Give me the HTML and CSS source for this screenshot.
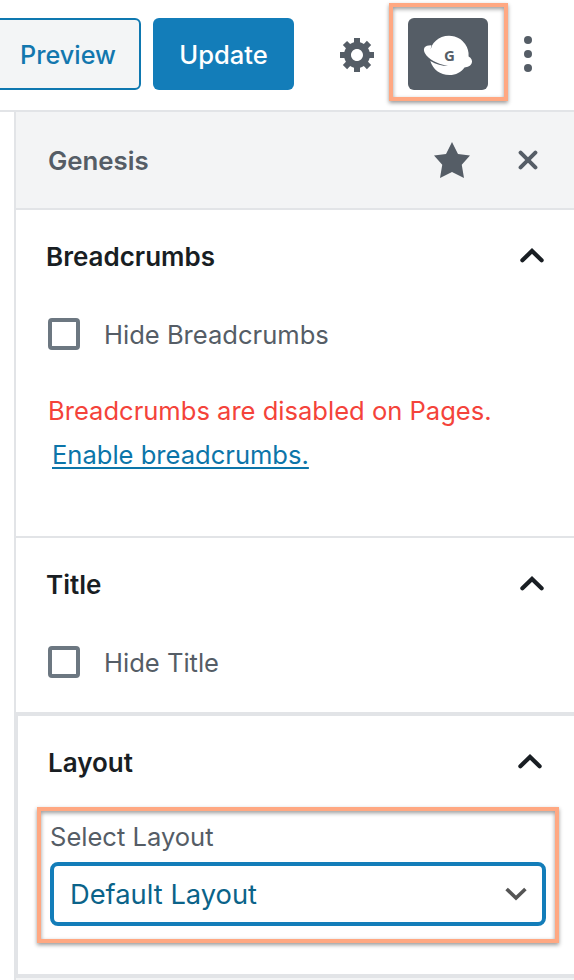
FILE: index.html
```html
<!DOCTYPE html>
<html lang="en">
<head>
  <meta charset="UTF-8" />
  <meta name="viewport" content="width=device-width, initial-scale=1.0" />
  <title>Genesis Settings</title>
  <link rel="stylesheet" href="styles.css">
</head>
<body>
  <header class="toolbar">
    <button class="btn btn-preview">Preview</button>
    <button class="btn btn-update">Update</button>
    <button class="icon-btn settings-btn" aria-label="Settings">
      <svg width="40" height="40" viewBox="0 0 20 20"><path d="M18 12h-2.18c-.17.7-.44 1.35-.81 1.93l1.54 1.54-2.1 2.1-1.54-1.54c-.58.36-1.23.63-1.91.79V19H8v-2.18c-.68-.16-1.33-.43-1.91-.79l-1.54 1.54-2.12-2.12 1.54-1.54c-.36-.58-.63-1.23-.79-1.91H1V9.03h2.17c.16-.7.44-1.35.8-1.94L2.43 5.55l2.1-2.1 1.54 1.54c.58-.37 1.24-.64 1.93-.81V2h3v2.18c.68.16 1.33.43 1.91.79l1.54-1.54 2.12 2.12-1.54 1.54c.36.59.64 1.24.8 1.94H18V12zm-8.5 1.5c1.66 0 3-1.34 3-3s-1.34-3-3-3-3 1.34-3 3 1.34 3 3 3z"/></svg>
    </button>
    <div class="highlight highlight-icon">
      <button class="genesis-btn" aria-label="Genesis">
        <svg width="80" height="72" viewBox="0 0 80 72">
          <path class="planet" d="M22.6 31.5L24 27.6A19.6 19.6 0 0 1 60.6 38.5C63.5 40 64.6 42.6 63.8 45C62.6 48.2 59.6 49 56.5 49.4C53 54 48 57 41.5 57C32 57 25 51.5 22.3 43C28 46.5 34 48 40 48C29 46 20 41 16.8 35C14.5 30 17 27 23.4 27.2Z"/>
          <text class="planet-letter" x="41.5" y="42.7" text-anchor="middle">G</text>
        </svg>
      </button>
    </div>
    <button class="icon-btn more-btn" aria-label="More">
      <svg width="8" height="36" viewBox="0 0 8 36"><circle cx="4" cy="4" r="4"/><circle cx="4" cy="18" r="4"/><circle cx="4" cy="32" r="4"/></svg>
    </button>
  </header>

  <aside class="sidebar">
    <div class="sidebar-header">
      <span class="sidebar-title">Genesis</span>
      <svg class="star" width="40" height="40" viewBox="0 0 20 20"><path d="M10 1l3 6 6 .75-4.12 4.62L16 19l-6-3-6 3 1.13-6.63L1 7.75 7 7z"/></svg>
      <svg class="close" width="20" height="20" viewBox="0 0 20 20"><path d="M2.6 2.6l14.8 14.8M17.4 2.6L2.6 17.4"/></svg>
    </div>

    <section class="panel panel-breadcrumbs">
      <h2 class="panel-title"><span>Breadcrumbs</span>
        <svg class="chevron" width="24" height="15" viewBox="0 0 24 15"><path d="M2.4 12.2L12 3l9.6 9.2"/></svg>
      </h2>
      <label class="check-row"><input type="checkbox" class="check"><span>Hide Breadcrumbs</span></label>
      <p class="notice">Breadcrumbs are disabled on Pages.</p>
      <p class="notice-action"><a class="link" href="#">Enable breadcrumbs.</a></p>
    </section>

    <section class="panel panel-page-title">
      <h2 class="panel-title"><span>Title</span>
        <svg class="chevron" width="24" height="15" viewBox="0 0 24 15"><path d="M2.4 12.2L12 3l9.6 9.2"/></svg>
      </h2>
      <label class="check-row"><input type="checkbox" class="check"><span>Hide Title</span></label>
    </section>

    <section class="panel panel-layout">
      <h2 class="panel-title"><span>Layout</span>
        <svg class="chevron" width="24" height="15" viewBox="0 0 24 15"><path d="M2.4 12.2L12 3l9.6 9.2"/></svg>
      </h2>
      <div class="highlight highlight-select">
        <div class="select-label">Select Layout</div>
        <div class="select" role="button" tabindex="0">
          <span>Default Layout</span>
          <svg class="arrow" width="22" height="14" viewBox="0 0 22 14"><path d="M1.6 2L11 11l9.4-9"/></svg>
        </div>
      </div>
    </section>
  </aside>
</body>
</html>
```
FILE: styles.css
```css
* {
  box-sizing: border-box;
  margin: 0;
  padding: 0;
}
body {
  width: 574px;
  height: 980px;
  overflow: hidden;
  background: #fff;
  color: #555d66;
  font-family: Inter, "Liberation Sans", sans-serif;
  font-size: 25.55px;
}
svg {
  display: block;
  flex: none;
}
button {
  font: inherit;
  border: none;
  background: none;
  cursor: pointer;
}

/* Top bar */
.toolbar {
  display: flex;
  align-items: flex-start;
  height: 112px;
  border-bottom: 2px solid #e2e4e7;
}
.btn {
  height: 72px;
  margin-top: 18px;
  border-radius: 6px;
  font-weight: 500;
  white-space: nowrap;
}
.btn-preview {
  width: 147px;
  margin-left: -6px;
  padding: 2px 0 0 1px;
  border: 2px solid #0e78b0;
  background: #f3f5f6;
  color: #1277ae;
  font-size: 25.2px;
}
.btn-update {
  width: 141px;
  margin-left: 12px;
  background: #137db9;
  color: #fff;
}
.icon-btn {
  fill: #555d66;
}
.settings-btn {
  margin: 34px 0 0 44px;
}
.highlight {
  border: 4px solid #ffa882;
  box-shadow: 0 2px 4px rgba(0,0,0,0.4), inset 0 2px 4px rgba(0,0,0,0.4);
}
.highlight-icon {
  width: 119px;
  height: 98px;
  margin: 3px 0 0 11px;
  padding: 11px 0 0 15px;
}
.genesis-btn {
  display: block;
  width: 80px;
  height: 72px;
  border-radius: 6px;
  background: #555d66;
}
.planet {
  fill: #fff;
}
.planet-letter {
  fill: #555d66;
  font-family: "Open Sans", sans-serif;
  font-size: 15px;
  font-weight: 700;
}
.more-btn {
  margin: 36px 0 0 16px;
}

/* Sidebar */
.sidebar {
  height: 868px;
  margin-left: 14px;
  border-left: 2px solid #e2e4e7;
  background: #f3f4f5;
}
.sidebar-header {
  display: flex;
  align-items: center;
  height: 98px;
  padding: 0 36px 0 32px;
  border-bottom: 2px solid #e2e4e7;
}
.sidebar-title {
  margin-right: auto;
  font-size: 25.8px;
  font-weight: 600;
}
.star {
  margin-right: 46px;
  fill: #555d66;
}
.close {
  stroke: #555d66;
  stroke-width: 4;
  stroke-linecap: round;
}
.panel {
  padding: 0 30px;
  background: #fff;
}
.panel-breadcrumbs {
  height: 328px;
  border-bottom: 2px solid #e2e4e7;
}
.panel-page-title {
  height: 174px;
}
.panel-layout {
  height: 266px;
  border: 4px solid #e2e4e7;
  border-width: 4px 0 4px 2px;
  padding: 0 15px 0 19px;
}
.panel-title {
  display: flex;
  align-items: center;
  justify-content: space-between;
  height: 94px;
  font-size: 26px;
  font-weight: 600;
  color: #191e23;
}
.panel-title span {
  padding-bottom: 2px;
}
.panel-layout .panel-title {
  padding: 0 17px 0 11px;
}
.chevron {
  margin-bottom: 3px;
  fill: none;
  stroke: #191e23;
  stroke-width: 4.2;
  stroke-linecap: round;
}
.check-row {
  display: flex;
  align-items: center;
  height: 60px;
  padding-left: 2px;
  gap: 24px;
}
.check {
  width: 32px;
  height: 32px;
  appearance: none;
  border: 4px solid #6c7781;
  border-radius: 4px;
  background: #fff;
}
.notice {
  margin-top: 25px;
  padding-left: 2px;
  line-height: 44px;
  color: #f4433a;
  white-space: nowrap;
}
.notice-action {
  padding-left: 6px;
  line-height: 44px;
}
.link {
  color: #0c75a9;
  text-decoration-thickness: 2px;
  text-underline-offset: 3px;
  text-decoration-skip-ink: none;
}

/* Layout select */
.highlight-select {
  height: 136px;
  margin-top: -3px;
  padding: 7px 9px;
}
.select-label {
  height: 44px;
  line-height: 38px;
}
.select {
  display: flex;
  align-items: center;
  justify-content: space-between;
  height: 64px;
  padding: 0 15px 0 16px;
  border: 4px solid #137db9;
  border-radius: 8px;
  font-size: 27.3px;
  color: #0b6389;
}
.arrow {
  fill: none;
  stroke: #555;
  stroke-width: 3.6;
}
```
